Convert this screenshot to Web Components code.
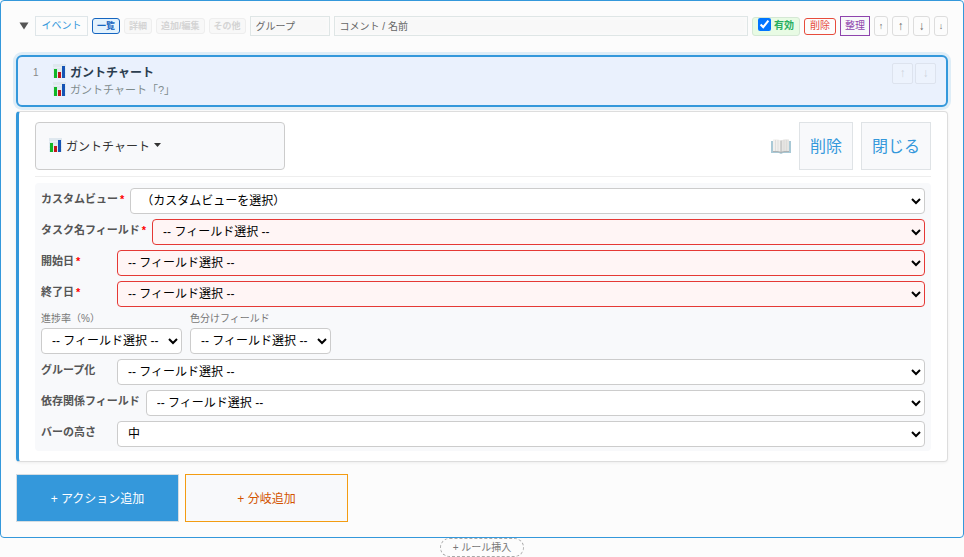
<!DOCTYPE html>
<html lang="ja">
<head>
<meta charset="utf-8">
<title>ルール設定</title>
<style>
    body {
        margin: 0;
        background: #fcfcfc;
        color: #333;
        font-family: "Liberation Sans", "Noto Sans CJK JP", sans-serif;
        font-size: 12px;
    }
</style>
</head>
<body>

<rule-card>
    <rule-header slot="header"></rule-header>
    <action-item number="1" name="ガントチャート" detail="ガントチャート「?」"></action-item>
    <action-editor name="ガントチャート">
        <field-row label="カスタムビュー" option="（カスタムビューを選択）" required></field-row>
        <field-row label="タスク名フィールド" option="-- フィールド選択 --" required invalid></field-row>
        <field-row label="開始日" option="-- フィールド選択 --" required invalid></field-row>
        <field-row label="終了日" option="-- フィールド選択 --" required invalid></field-row>
        <field-group>
            <field-row label="進捗率（%）" option="-- フィールド選択 --" stacked></field-row>
            <field-row label="色分けフィールド" option="-- フィールド選択 --" stacked></field-row>
        </field-group>
        <field-row label="グループ化" option="-- フィールド選択 --"></field-row>
        <field-row label="依存関係フィールド" option="-- フィールド選択 --"></field-row>
        <field-row label="バーの高さ" option="中"></field-row>
    </action-editor>
    <add-button slot="footer" primary>+ アクション追加</add-button>
    <add-button slot="footer">+ 分岐追加</add-button>
</rule-card>
<rule-insert>+ ルール挿入</rule-insert>

<script>
function render(element, templateString) {
    const template = document.createElement("template");
    template.innerHTML = templateString;
    const shadowRoot = element.attachShadow({mode: "open"});
    shadowRoot.appendChild(template.content.cloneNode(true));
    return shadowRoot;
}

class RuleCard extends HTMLElement {
    constructor() {
        super();
        render(this, `
            <style>
                :host {
                    display: block;
                    border: 1px solid #3498db;
                    border-radius: 4px;
                    padding: 15px;
                    background: #fcfcfc;
                }
                .actions {
                    display: flex;
                    flex-direction: column;
                    gap: 4px;
                    margin: 19px 0 12px;
                }
                .footer {
                    display: flex;
                    gap: 6px;
                }
            </style>
            <slot name="header"></slot>
            <div class="actions"><slot></slot></div>
            <div class="footer"><slot name="footer"></slot></div>
        `);
    }
}

class RuleHeader extends HTMLElement {
    constructor() {
        super();
        render(this, `
            <style>
                :host {
                    display: flex;
                    align-items: center;
                    gap: 4px;
                    height: 20px;
                }
                button, input, .enabled {
                    box-sizing: border-box;
                    font: inherit;
                    font-size: 10px;
                    line-height: 14px;
                    margin: 0;
                    white-space: nowrap;
                    flex: none;
                }
                button {
                    padding: 0 4px;
                    border: 1px solid #ddd;
                    border-radius: 3px;
                    background: #fcfcfc;
                    color: #666;
                }
                .toggle {
                    width: 15px;
                    height: 20px;
                    padding: 0 0 0 3px;
                    border: 0;
                    text-align: left;
                    line-height: 0;
                }
                .event {
                    width: 53px;
                    height: 20px;
                    border-color: #dfe6e9;
                    border-radius: 0;
                    color: #3498db;
                }
                .view {
                    height: 16px;
                    font-size: 9px;
                    font-weight: bold;
                    border-color: #eee;
                    background: #f8f8f8;
                    color: #d4d4d4;
                }
                .view.on {
                    border-color: #1565c0;
                    background: #e3f2fd;
                    color: #1565c0;
                }
                input[type=text] {
                    height: 20px;
                    padding: 0 5px;
                    border: 1px solid #dfe6e6;
                    background: #f8f8f8;
                    box-shadow: inset 0 0 5px #fcfcfc;
                }
                input::placeholder {
                    color: #666;
                    opacity: 1;
                }
                .group {
                    width: 80px;
                }
                input.comment {
                    flex: 1;
                    min-width: 0;
                }
                .enabled {
                    display: flex;
                    align-items: center;
                    gap: 3px;
                    height: 19px;
                    padding: 0 5px;
                    border: 1px solid #d5e8d5;
                    border-radius: 3px;
                    background: #e8fbe4;
                    color: #27ae60;
                    font-weight: bold;
                }
                .enabled input {
                    width: 13px;
                    height: 13px;
                    margin-bottom: 4px;
                    accent-color: #0075ff;
                }
                .delete {
                    height: 17px;
                    padding: 0 5px;
                    border-color: #e74c3c;
                    color: #e74c3c;
                }
                .sort {
                    height: 20px;
                    border-color: #8e44ad;
                    border-radius: 0;
                    background: #f8f9fa;
                    color: #8e44ad;
                }
                .move {
                    width: 17px;
                    height: 20px;
                    padding: 0;
                    font-size: 12px;
                }
                .move.far {
                    width: 14px;
                    font-size: 9px;
                }
            </style>
            <button class="toggle" aria-label="折りたたむ"><svg width="10" height="8" viewBox="0 0 10 8"><path d="M0.5 0.5h9L5 7.5z" fill="#555"/></svg></button>
            <button class="event">イベント</button>
            <button class="view on">一覧</button>
            <button class="view">詳細</button>
            <button class="view">追加/編集</button>
            <button class="view">その他</button>
            <input class="group" type="text" placeholder="グループ" aria-label="グループ">
            <input class="comment" type="text" placeholder="コメント / 名前" aria-label="コメント / 名前">
            <label class="enabled"><input type="checkbox" checked>有効</label>
            <button class="delete">削除</button>
            <button class="sort">整理</button>
            <button class="move far">↑</button>
            <button class="move">↑</button>
            <button class="move">↓</button>
            <button class="move far">↓</button>
        `);
    }
}

class ChartIcon extends HTMLElement {
    constructor() {
        super();
        render(this, `
            <style>
                :host { display: inline-flex; }
            </style>
            <svg width="13" height="14" viewBox="0 0 13 14">
                <rect width="13" height="14" fill="#dfe8ef"/>
                <path d="M0 3.500h13M0 7h13M0 10.500h13" stroke="#edf3f7" stroke-width=".7"/>
                <rect x="1" y="5" width="3" height="9" fill="#12b627"/>
                <rect x="5" y="8" width="3" height="6" fill="#c4161c"/>
                <rect x="9" y="2" width="3" height="12" fill="#1553b5"/>
            </svg>
        `);
    }
}

class ActionItem extends HTMLElement {
    constructor() {
        super();
        const shadowRoot = render(this, `
            <style>
                :host {
                    display: flex;
                    box-sizing: border-box;
                    height: 52px;
                    padding: 5px 10px 7px 15px;
                    border: 2px solid #3498db;
                    border-radius: 6px;
                    background: #eaf1fd;
                    box-shadow: 0 0 0 3px rgba(52, 152, 219, .15);
                }
                .number {
                    width: 20px;
                    font-size: 10px;
                    line-height: 22px;
                    color: #888;
                }
                .text {
                    flex: 1;
                }
                .name, .detail {
                    display: flex;
                    align-items: center;
                    gap: 4px;
                    height: 18px;
                }
                .name {
                    font-weight: bold;
                    color: #2c3e50;
                }
                .detail {
                    font-size: 11px;
                    color: #7f8c8d;
                }
                .moves {
                    display: flex;
                    gap: 2px;
                    padding-top: 1px;
                }
                button {
                    width: 21px;
                    height: 21px;
                    padding: 0 0 2px;
                    border: 1px solid #dde3ee;
                    border-radius: 2px;
                    background: #edf3fd;
                    color: #cfd5dd;
                    font: inherit;
                }
            </style>
            <div class="number"></div>
            <div class="text">
                <div class="name"><chart-icon></chart-icon><span></span></div>
                <div class="detail"><chart-icon></chart-icon><span></span></div>
            </div>
            <div class="moves"><button disabled>↑</button><button disabled>↓</button></div>
        `);
        shadowRoot.querySelector(".number").textContent = this.getAttribute("number");
        shadowRoot.querySelector(".name span").textContent = this.getAttribute("name");
        shadowRoot.querySelector(".detail span").textContent = this.getAttribute("detail");
    }
}

class ActionEditor extends HTMLElement {
    constructor() {
        super();
        const shadowRoot = render(this, `
            <style>
                :host {
                    display: block;
                    padding: 10px 16px;
                    border: 1px solid #ddd;
                    border-left: 3px solid #3498db;
                    border-radius: 4px;
                    background: #fff;
                    box-shadow: 0 1px 3px rgba(0, 0, 0, .06);
                }
                .bar {
                    display: flex;
                    align-items: center;
                    gap: 8px;
                    padding-bottom: 6px;
                    border-bottom: 1px solid #eee;
                    margin-bottom: 6px;
                }
                button {
                    box-sizing: border-box;
                    height: 48px;
                    padding: 0 10px 2px;
                    border: 1px solid #dfe3e6;
                    background: #f8f9fb;
                    color: #3498db;
                    font: inherit;
                    font-size: 16px;
                }
                .type {
                    display: flex;
                    align-items: center;
                    gap: 4px;
                    width: 250px;
                    padding: 0 13px 2px;
                    margin-right: auto;
                    border-color: #ccc;
                    border-radius: 4px;
                    color: #333;
                    font-size: 12px;
                }
                .help {
                    display: flex;
                }
                .fields {
                    display: flex;
                    flex-direction: column;
                    gap: 5px;
                    padding: 5px 6px 4px;
                    border-radius: 4px;
                    background: #f8f9fb;
                }
            </style>
            <div class="bar">
                <button class="type">
                    <chart-icon></chart-icon><span></span>
                    <svg width="7" height="4" viewBox="0 0 7 4"><path d="M0 0h7L3.500 4z" fill="#333"/></svg>
                </button>
                <a class="help" href="#help" aria-label="ヘルプ">
                    <svg width="20" height="16" viewBox="0 0 20 16">
                        <path d="M0 3h20v12h-8l-2 1-2-1H0z" fill="#a9c9d6"/>
                        <path d="M2 1.500q4-1 8 1v11.500q-4-1-8-.5z" fill="#f1f0ee"/>
                        <path d="M18 1.500q-4-1-8 1v11.500q4-1 8-.5z" fill="#e6e5e3"/>
                        <path d="M4.500 2v11M7 2v11M13 2v11M15.500 2v11" stroke="#dad9d7" stroke-width=".8"/>
                        <path d="M2 13.500q4-.5 8 .8 4-1.300 8-.8" fill="none" stroke="#a8a8a8" stroke-width=".8"/>
                        <path d="M10 2.500v12" stroke="#aaa" stroke-width=".9"/>
                    </svg>
                </a>
                <button>削除</button>
                <button>閉じる</button>
            </div>
            <div class="fields"><slot></slot></div>
        `);
        shadowRoot.querySelector(".type span").textContent = this.getAttribute("name");
    }
}

class FieldGroup extends HTMLElement {
    constructor() {
        super();
        render(this, `
            <style>
                :host {
                    display: flex;
                    gap: 8px;
                }
            </style>
            <slot></slot>
        `);
    }
}

class FieldRow extends HTMLElement {
    constructor() {
        super();
        const shadowRoot = render(this, `
            <style>
                :host {
                    display: flex;
                    gap: 6px;
                }
                label {
                    flex: none;
                    min-width: 70px;
                    font-size: 11px;
                    font-weight: bold;
                    line-height: 22px;
                    color: #555;
                }
                .mark {
                    margin-left: 2px;
                    color: red;
                }
                select {
                    box-sizing: border-box;
                    flex: 1;
                    min-width: 0;
                    height: 26px;
                    padding: 0 5px 0 6px;
                    border: 1px solid #ccc;
                    border-radius: 4px;
                    background: #fff;
                    color: #000;
                    font: inherit;
                    font-size: 12px;
                }
                :host([invalid]) select {
                    border-color: #e53935;
                    background: #fff5f5;
                }
                :host([stacked]) {
                    flex-direction: column;
                    gap: 3px;
                }
                :host([stacked]) label {
                    font-size: 10px;
                    font-weight: normal;
                    line-height: 13px;
                    color: #777;
                }
                :host([stacked]) select {
                    flex: none;
                    width: 141px;
                }
            </style>
            <label for="field"></label>
            <select id="field"><option></option></select>
        `);

        const label = shadowRoot.querySelector("label");
        label.textContent = this.getAttribute("label");
        if (this.hasAttribute("required")) {
            const mark = document.createElement("span");
            mark.className = "mark";
            mark.textContent = "*";
            label.appendChild(mark);
        }
        shadowRoot.querySelector("option").textContent = this.getAttribute("option");
    }
}

class AddButton extends HTMLElement {
    constructor() {
        super();
        render(this, `
            <style>
                :host { display: block; }
                button {
                    box-sizing: border-box;
                    width: 163px;
                    height: 48px;
                    padding: 0 6px 2px;
                    border: 1px solid #f39c12;
                    background: #f8f9fb;
                    color: #d35400;
                    font: inherit;
                }
                :host([primary]) button {
                    border-color: #d5dde2;
                    background: #3498db;
                    color: #fff;
                }
            </style>
            <button><slot></slot></button>
        `);
    }
}

class RuleInsert extends HTMLElement {
    constructor() {
        super();
        render(this, `
            <style>
                :host {
                    display: flex;
                    justify-content: center;
                }
                button {
                    height: 19px;
                    padding: 0 12px;
                    border: 1px dashed #aaa;
                    border-radius: 10px;
                    background: #fcfcfc;
                    color: #777;
                    font: inherit;
                    font-size: 10px;
                    line-height: 14px;
                }
            </style>
            <button><slot></slot></button>
        `);
    }
}

customElements.define("chart-icon", ChartIcon);
customElements.define("rule-card", RuleCard);
customElements.define("rule-header", RuleHeader);
customElements.define("action-item", ActionItem);
customElements.define("action-editor", ActionEditor);
customElements.define("field-group", FieldGroup);
customElements.define("field-row", FieldRow);
customElements.define("add-button", AddButton);
customElements.define("rule-insert", RuleInsert);
</script>
</body>
</html>
